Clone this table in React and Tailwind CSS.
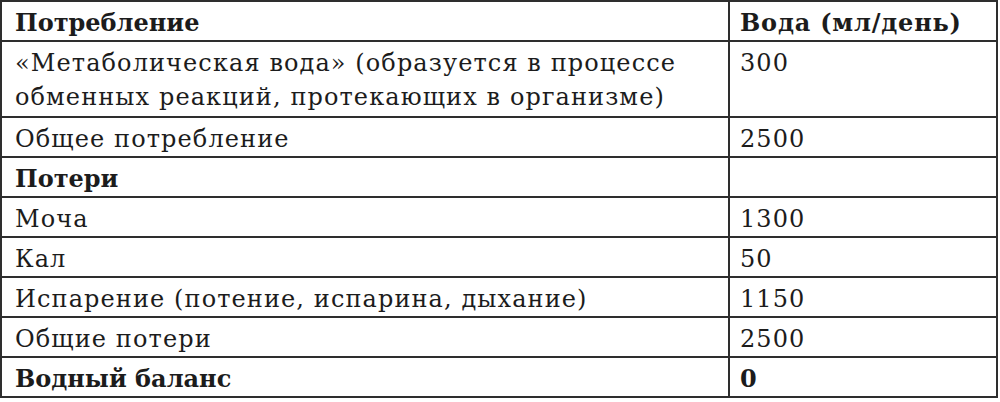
import React from 'react'

const rows = [
  { label: 'Потребление', value: 'Вода (мл/день)', bold: true },
  { label: '«Метаболическая вода» (образуется в процессе обменных реакций, протекающих в организме)', value: '300', tall: true },
  { label: 'Общее потребление', value: '2500' },
  { label: 'Потери', value: '', boldLabel: true },
  { label: 'Моча', value: '1300' },
  { label: 'Кал', value: '50' },
  { label: 'Испарение (потение, испарина, дыхание)', value: '1150' },
  { label: 'Общие потери', value: '2500' },
  { label: 'Водный баланс', value: '0', bold: true },
]

export default function App() {
  return (
    <div className="w-[1000px] h-[402px] bg-white">
      <table className="table-fixed border-collapse w-[998px] text-[24px] leading-[34px] text-[#1c1c1c] font-['DejaVu_Serif',serif]">
        <colgroup>
          <col className="w-[728px]" />
          <col />
        </colgroup>
        <tbody>
          {rows.map((r, i) => (
            <tr key={i}>
              <td
                className={`border-2 border-[#2e2e2e] align-top pl-[13px] pr-[30px] pt-[4px] ${r.tall ? 'pb-[2px]' : 'pb-0'} ${
                  r.bold || r.boldLabel ? 'font-bold' : 'tracking-[1.1px]'
                }`}
              >
                {r.label}
              </td>
              <td
                className={`border-2 border-[#2e2e2e] align-top pl-[10px] pt-[4px] pb-0 ${
                  r.bold ? 'font-bold tracking-[0.8px]' : 'tracking-[1.1px]'
                }`}
              >
                {r.value}
              </td>
            </tr>
          ))}
        </tbody>
      </table>
    </div>
  )
}
